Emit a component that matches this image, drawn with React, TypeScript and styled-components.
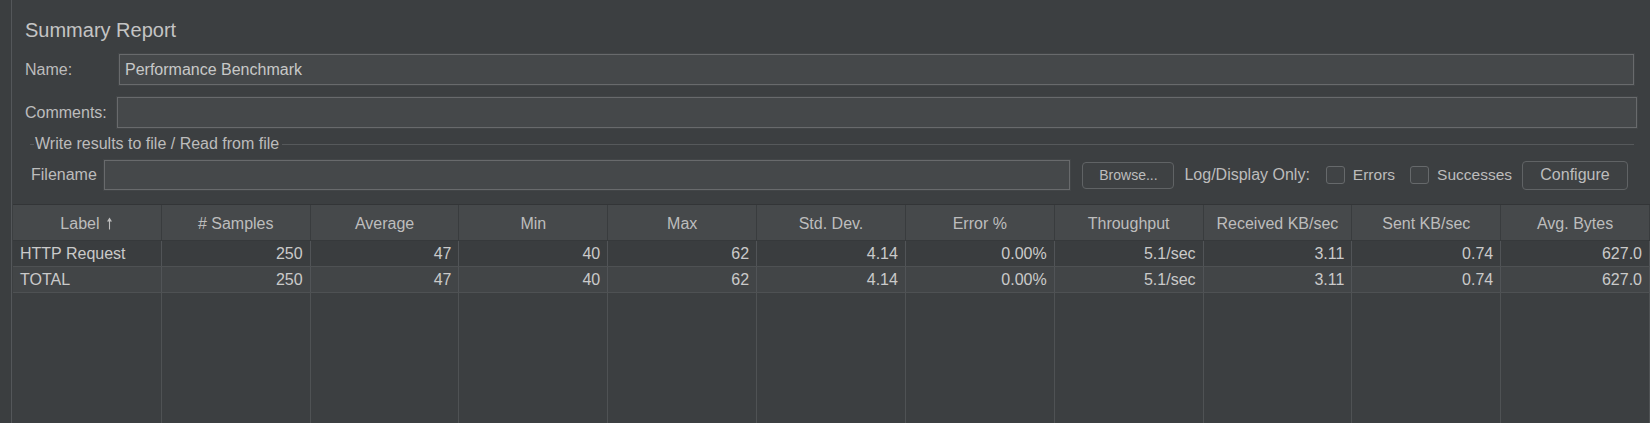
import styled, { createGlobalStyle } from 'styled-components';

const GlobalStyle = createGlobalStyle`
	html, body {
		margin: 0;
		padding: 0;
		height: 100%;
		background: #3c3f41;
	}
	body {
		font-family: "Liberation Sans", Arial, sans-serif;
		color: #bbbbbb;
		overflow: hidden;
	}
	#root {
		height: 100%;
	}
`;

type Align = 'left' | 'right';

const columns: { title: string; sorted?: boolean; align: Align }[] = [
	{ title: 'Label', sorted: true, align: 'left' },
	{ title: '# Samples', align: 'right' },
	{ title: 'Average', align: 'right' },
	{ title: 'Min', align: 'right' },
	{ title: 'Max', align: 'right' },
	{ title: 'Std. Dev.', align: 'right' },
	{ title: 'Error %', align: 'right' },
	{ title: 'Throughput', align: 'right' },
	{ title: 'Received KB/sec', align: 'right' },
	{ title: 'Sent KB/sec', align: 'right' },
	{ title: 'Avg. Bytes', align: 'right' },
];

const stats = ['250', '47', '40', '62', '4.14', '0.00%', '5.1/sec', '3.11', '0.74', '627.0'];
const rows = [['HTTP Request', ...stats], ['TOTAL', ...stats]];

const SortArrow = () => (
	<svg width="7" height="13" viewBox="0 0 7 13">
		<path d="M3.5 0.5 L6 4.5 L1 4.5 Z" fill="#bdbdbd" />
		<line x1="3.5" y1="4" x2="3.5" y2="12.5" stroke="#bdbdbd" strokeWidth="1.1" />
	</svg>
);

export default function App() {
	return (
		<>
			<GlobalStyle />
			<Page>
				<Panel>
					<Form>
						<Title>Summary Report</Title>
						<FieldRow $top={12} $left={13} $right={16}>
							<Label $width={94}>Name:</Label>
							<Field $height={31}>Performance Benchmark</Field>
						</FieldRow>
						<FieldRow $top={12} $left={13} $right={13}>
							<Label $width={92}>Comments:</Label>
							<Field $height={31} />
						</FieldRow>
						<GroupTitle>
							<GroupText>Write results to file / Read from file</GroupText>
						</GroupTitle>
						<FieldRow $top={7} $left={19} $right={22}>
							<Label $width={73}>Filename</Label>
							<Field $height={30} />
							<Button $small>Browse...</Button>
							<InlineText>Log/Display Only:</InlineText>
							<Check />
							<CheckText>Errors</CheckText>
							<Check />
							<CheckText>Successes</CheckText>
							<Button>Configure</Button>
						</FieldRow>
					</Form>
					<Table>
						<HeaderRow>
							{columns.map((c) => (
								<HeaderCell key={c.title}>
									{c.title}
									{c.sorted && <SortArrow />}
								</HeaderCell>
							))}
						</HeaderRow>
						{rows.map((r, i) => (
							<DataRow key={r[0]} $alt={i % 2 === 1}>
								{r.map((v, j) => (
									<DataCell key={j} $align={columns[j].align}>
										{v}
									</DataCell>
								))}
							</DataRow>
						))}
						<Filler>
							{columns.map((c) => (
								<FillerCell key={c.title} />
							))}
						</Filler>
					</Table>
				</Panel>
			</Page>
		</>
	);
}

const Page = styled.div`
	display: flex;
	height: 100%;
	padding-left: 11px;
	box-sizing: border-box;
	background: #3b3e40;
`;

const Panel = styled.div`
	flex: 1;
	display: flex;
	flex-direction: column;
	min-width: 0;
	border-left: 1px solid #54575a;
	background: #3c3f41;
`;

const Form = styled.div`
	display: flex;
	flex-direction: column;
	padding-top: 18px;
	padding-bottom: 14px;
`;

const Title = styled.div`
	padding-left: 13px;
	font-size: 20px;
	line-height: 24px;
	color: #c4c4c4;
`;

const FieldRow = styled.div<{ $top: number; $left: number; $right: number }>`
	display: flex;
	align-items: center;
	margin-top: ${(p) => p.$top}px;
	padding-left: ${(p) => p.$left}px;
	padding-right: ${(p) => p.$right}px;
`;

const Label = styled.div<{ $width: number }>`
	width: ${(p) => p.$width}px;
	flex-shrink: 0;
	font-size: 16px;
	color: #bcbcbc;
`;

const Field = styled.div<{ $height: number }>`
	flex: 1;
	height: ${(p) => p.$height}px;
	box-sizing: border-box;
	display: flex;
	align-items: center;
	padding-left: 5px;
	background: #45484a;
	border: 1px solid #686a6c;
	box-shadow: 0 0 0 1px #424547;
	font-size: 16px;
	color: #c8c8c8;
`;

const GroupTitle = styled.div`
	display: flex;
	align-items: center;
	height: 18px;
	margin-top: 7px;
	padding-left: 18px;
	padding-right: 16px;

	&::before {
		content: '';
		width: 4px;
		height: 1px;
		background: #56595b;
	}

	&::after {
		content: '';
		flex: 1;
		height: 1px;
		background: #56595b;
	}
`;

const GroupText = styled.span`
	padding: 0 3px 0 1px;
	font-size: 16px;
	color: #bcbcbc;
`;

const Button = styled.div<{ $small?: boolean }>`
	flex-shrink: 0;
	display: flex;
	align-items: center;
	justify-content: center;
	box-sizing: border-box;
	width: ${(p) => (p.$small ? '92px' : '106px')};
	height: ${(p) => (p.$small ? '27px' : '29px')};
	margin-left: ${(p) => (p.$small ? '12px' : '10px')};
	border: 1px solid #606365;
	border-radius: 4px;
	background: #3e4143;
	font-size: ${(p) => (p.$small ? '14px' : '16px')};
	color: #bdbdbd;
`;

const InlineText = styled.span`
	margin-left: 10px;
	font-size: 16px;
	color: #bcbcbc;
	white-space: nowrap;
`;

const Check = styled.span`
	flex-shrink: 0;
	width: 19px;
	height: 18px;
	box-sizing: border-box;
	margin-left: 16px;
	border: 1px solid #66696b;
	border-radius: 3px;
	background: #404345;
`;

const CheckText = styled.span`
	margin-left: 8px;
	font-size: 15.5px;
	color: #bcbcbc;
	white-space: nowrap;

	& + ${Check} {
		margin-left: 15px;
	}
`;

const Table = styled.div`
	flex: 1;
	display: flex;
	flex-direction: column;
	margin-left: 1px;
	min-height: 0;
	border-top: 1px solid #333537;
`;

const HeaderRow = styled.div`
	display: grid;
	grid-template-columns: repeat(11, 1fr);
	height: 35px;
	background: #46494b;
	border-bottom: 1px solid #36393b;
`;

const HeaderCell = styled.div`
	display: flex;
	align-items: center;
	justify-content: center;
	gap: 7px;
	padding-top: 2px;
	border-right: 1px solid #393c3e;
	font-size: 16px;
	color: #bdbdbd;
	white-space: nowrap;
`;

const DataRow = styled.div<{ $alt: boolean }>`
	display: grid;
	grid-template-columns: repeat(11, 1fr);
	height: 26px;
	box-sizing: border-box;
	background: ${(p) => (p.$alt ? '#424547' : '#3a3d3f')};
	border-bottom: 1px solid #4e5153;
`;

const DataCell = styled.div<{ $align: Align }>`
	display: flex;
	align-items: center;
	justify-content: ${(p) => (p.$align === 'left' ? 'flex-start' : 'flex-end')};
	padding: 0 7px;
	border-right: 1px solid #515457;
	font-size: 16px;
	color: #cacaca;
	white-space: nowrap;
`;

const Filler = styled.div`
	flex: 1;
	display: grid;
	grid-template-columns: repeat(11, 1fr);
	background: #3c3f41;
`;

const FillerCell = styled.div`
	border-right: 1px solid #4f5254;
`;
